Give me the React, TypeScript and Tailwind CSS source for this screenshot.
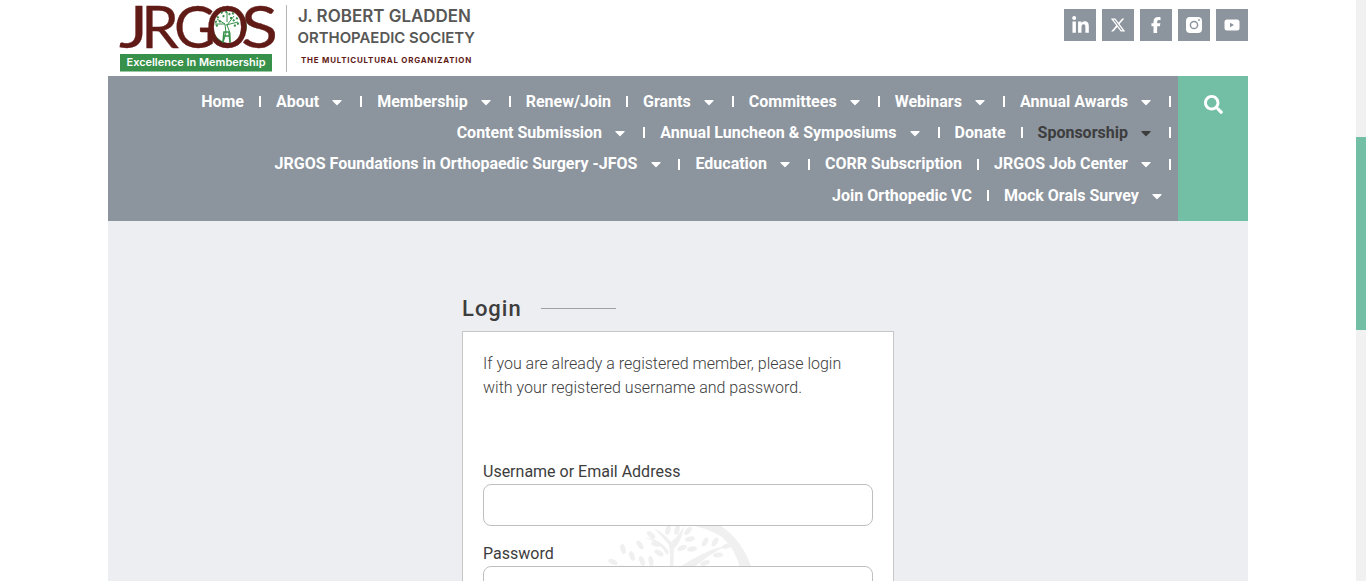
import { FaLinkedinIn, FaXTwitter, FaFacebookF } from "react-icons/fa6";
import { FaCaretDown, FaSearch } from "react-icons/fa";

type Item = { label: string; menu?: boolean; active?: boolean; last?: boolean };

const rows: Item[][] = [
  [
    { label: "Home" },
    { label: "About", menu: true },
    { label: "Membership", menu: true },
    { label: "Renew/Join" },
    { label: "Grants", menu: true },
    { label: "Committees", menu: true },
    { label: "Webinars", menu: true },
    { label: "Annual Awards", menu: true },
  ],
  [
    { label: "Content Submission", menu: true },
    { label: "Annual Luncheon & Symposiums", menu: true },
    { label: "Donate" },
    { label: "Sponsorship", menu: true, active: true },
  ],
  [
    { label: "JRGOS Foundations in Orthopaedic Surgery -JFOS", menu: true },
    { label: "Education", menu: true },
    { label: "CORR Subscription" },
    { label: "JRGOS Job Center", menu: true },
  ],
  [
    { label: "Join Orthopedic VC" },
    { label: "Mock Orals Survey", menu: true, last: true },
  ],
];

// Leaf centres and rotation in degrees.
const leaves = [
  [651, 535, -50], [668, 530, 15], [677, 530, 15], [688, 531, 40], [640, 545, -35],
  [656, 544, -75], [623, 549, -15], [632, 556, -20], [613, 562, -65], [642, 561, -20],
  [651, 561, -10], [690, 539, 75], [682, 548, 65], [692, 549, 80], [705, 542, 30],
  [715, 542, 30], [718, 555, 85], [727, 546, 70], [705, 563, 70], [659, 553, -60],
];

function Logo() {
  return (
    <svg width="380" height="76" viewBox="108 0 380 76" className="block overflow-visible">
      <path d="M228 7A20 20 0 0 1 247 27A20 20 0 0 1 244 36L240 33A16 16 0 0 0 228 9Z" fill="#37914a" />
      <path d="M209 27A19 19 0 0 0 233 46L232 43A17 17 0 0 1 213 27Z" fill="#37914a" />
      <g fill="#611b17" stroke="#611b17" strokeWidth="0.300" fontFamily="Lato, sans-serif" fontSize="59">
        <text x="119" y="47.500" textLength="29" lengthAdjust="spacingAndGlyphs">J</text>
        <text x="141" y="47.500" textLength="38" lengthAdjust="spacingAndGlyphs">R</text>
        <text x="174" y="47.500" textLength="42" lengthAdjust="spacingAndGlyphs">G</text>
        <text x="206" y="47.500" textLength="43" lengthAdjust="spacingAndGlyphs">O</text>
        <text x="241" y="47.500" textLength="37" lengthAdjust="spacingAndGlyphs">S</text>
      </g>
      <g stroke="#37914a" fill="none">
        <path d="M223 43L226 33L225 24L217 19M230 43L230 33L227 25L234 16M226 25L238 22M225 24L215 24M227 22L227 12" strokeWidth="1" />
        <path d="M223 42L224 32L229 32L230 42M224 36h5" strokeWidth="1.600" />
        <path d="M215 22l3-1M217 17l3 1M221 12l2 2M226 11l1 3M232 13l2 1M236 18l2 1M237 24l3-1M219 21l2 1M230 18l3 0M223 17l1-2M233 21l2-2M216 26l2-1M229 15l1-2M234 26l2-1" strokeWidth="2" strokeDasharray="2 1" />
      </g>
      <rect x="120" y="54" width="152" height="17.500" fill="#37914a" />
      <text x="126.500" y="66" fontFamily="Inter, sans-serif" fontWeight="600" fontSize="10.500" fill="#fff" textLength="139" lengthAdjust="spacingAndGlyphs">Excellence In Membership</text>
      <rect x="286" y="5" width="1" height="67" fill="#b5b5b5" />
      <text x="298" y="22" fontFamily="Inter, sans-serif" fontWeight="600" fontSize="17" fill="#575756" textLength="173" lengthAdjust="spacingAndGlyphs">J. ROBERT GLADDEN</text>
      <text x="297.500" y="43" fontFamily="Inter, sans-serif" fontWeight="600" fontSize="15" fill="#575756" textLength="177.500" lengthAdjust="spacingAndGlyphs">ORTHOPAEDIC SOCIETY</text>
      <text x="301" y="63.300" fontFamily="Inter, sans-serif" fontWeight="700" fontSize="8" letterSpacing="0.800" fill="#611b17" textLength="171" lengthAdjust="spacingAndGlyphs">THE MULTICULTURAL ORGANIZATION</text>
    </svg>
  );
}

function Instagram() {
  return (
    <svg width="16" height="16" viewBox="0 0 16 16" fill="none">
      <rect width="16" height="16" rx="4" fill="#fff" />
      <circle cx="8" cy="8" r="3.600" stroke="#8c949d" strokeWidth="1.500" />
      <circle cx="13" cy="3" r="0.900" fill="#8c949d" />
    </svg>
  );
}

function Youtube() {
  return (
    <svg width="16" height="12" viewBox="0 0 16 12">
      <rect x="0.500" y="0.500" width="15" height="11" rx="2.500" fill="#fff" />
      <path d="M6 3.800L10 6L6 8.200Z" fill="#8c949d" />
    </svg>
  );
}

function NavItem({ label, menu, active, last }: Item) {
  return (
    <li className="flex items-center">
      <a className={active ? "flex items-center pl-[15px] text-[#3d3d3d]" : "flex items-center pl-[15px] text-white"}>
        {label}
        {menu && <FaCaretDown className="ml-[13.2px] h-4 w-[10px]" />}
      </a>
      {last ? (
        <span className="w-[9px]" />
      ) : (
        <span className={menu ? "ml-[17.9px] h-[11px] w-[2px] bg-white" : "ml-[15px] h-[11px] w-[2px] bg-white"} />
      )}
    </li>
  );
}

export default function App() {
  return (
    <div className="flex h-[581px] overflow-hidden bg-white font-[Roboto,sans-serif] text-[#3d3d3d]">
      <div className="ml-[108px] flex w-[1140px] flex-col">
        <header className="flex h-[76px] shrink-0 justify-between">
          <Logo />
          <div className="flex gap-[6px] pt-[9px] text-white">
            <a className="flex size-8 items-center justify-center bg-[#8c949d]"><FaLinkedinIn size={19} /></a>
            <a className="flex size-8 items-center justify-center bg-[#8c949d]"><FaXTwitter size={16} /></a>
            <a className="flex size-8 items-center justify-center bg-[#8c949d]"><FaFacebookF size={16} /></a>
            <a className="flex size-8 items-center justify-center bg-[#8c949d]"><Instagram /></a>
            <a className="flex size-8 items-center justify-center bg-[#8c949d]"><Youtube /></a>
          </div>
        </header>
        <nav className="flex h-[145px] shrink-0 bg-[#8c949d]">
          <div className="flex flex-1 flex-col pt-[10px] pr-[7px] text-base font-bold">
            {rows.map((row, i) => (
              <ul key={i} className="flex h-[31.3px] items-center justify-end whitespace-nowrap">
                {row.map((item) => (
                  <NavItem key={item.label} {...item} />
                ))}
              </ul>
            ))}
          </div>
          <div className="flex w-[70px] justify-center bg-[#72bfa5] pt-[19px] text-white">
            <FaSearch size={19} />
          </div>
        </nav>
        <main className="flex h-[360px] shrink-0 flex-col items-center overflow-hidden bg-[#edeef2] pt-[71px]">
          <div className="w-[432px] shrink-0">
            <div className="flex h-[39px] items-start gap-[19px]">
              <h1 className="pt-px text-[22px] leading-8 font-medium tracking-[1px]">Login</h1>
              <span className="mt-4 h-px w-[75px] bg-[#a0a0a0]" />
            </div>
            <form className="relative flex h-[400px] flex-col border border-[#c6c6c6] bg-white px-5 pt-5">
              <svg className="absolute top-[188px] left-[137px]" width="160" height="60" viewBox="600 520 160 60" fill="#f0f0f0">
                <path d="M686 524L718 524Q743 539 753 572L741 572Q736 549 722 537Q708 528 686 524Z" />
                {leaves.map(([x, y, r], i) => (
                  <ellipse key={i} cx={x} cy={y} rx="2.500" ry="5" transform={`rotate(${r} ${x} ${y})`} />
                ))}
                <path d="M669 575Q671 556 669 545Q664 539 654 528Q665 534 671 542Q678 537 684 526Q682 541 674 549L673 575ZM677 569Q700 552 730 544Q703 557 686 575ZM669 552Q660 538 645 538Q659 541 667 555ZM640 575Q630 566 615 565Q635 565 645 575Z" />
              </svg>
              <p className="h-[108px] text-base leading-6 font-light">
                If you are already a registered member, please login with your registered username and password.
              </p>
              <label className="flex h-6 items-center text-base">Username or Email Address</label>
              <input className="relative h-[42px] rounded-lg border border-[#bfbfbf] bg-white px-3" />
              <label className="relative mt-4 flex h-6 items-center text-base">Password</label>
              <input type="password" className="relative h-[42px] rounded-lg border border-[#bfbfbf] bg-white px-3" />
            </form>
          </div>
        </main>
      </div>
      <div className="ml-auto w-[10px] bg-[#f1f1f1] pt-[137px]">
        <div className="h-[193px] bg-[#72bfa5]" />
      </div>
    </div>
  );
}
